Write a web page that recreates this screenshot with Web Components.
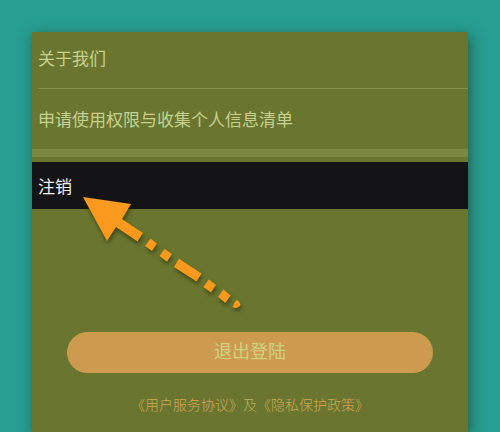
<!DOCTYPE html>
<html lang="zh-CN">
<head>
<meta charset="UTF-8">
<meta name="viewport" content="width=device-width, initial-scale=1">
<title>设置</title>
<style>
    body {
        margin: 0;
        background: #279f92;
        font-family: "Liberation Sans", "Noto Sans CJK SC", sans-serif;
    }
</style>
</head>
<body>
<settings-panel>
    <settings-row href="#about">关于我们</settings-row>
    <settings-row href="#permissions" last>申请使用权限与收集个人信息清单</settings-row>
    <settings-row href="#cancel" active>注销<pointer-arrow slot="marker"></pointer-arrow></settings-row>
    <logout-button slot="footer">退出登陆</logout-button>
    <legal-links slot="footer"></legal-links>
</settings-panel>

<script>
function makeTemplate(html) {
    const template = document.createElement("template")
    template.innerHTML = html
    return template
}

function attach(host, template) {
    const shadow = host.attachShadow({ mode: "open" })
    shadow.append(template.content.cloneNode(true))
    return shadow
}

const panelTemplate = makeTemplate(`
    <style>
        :host {
            display: flex;
            box-sizing: border-box;
            min-height: 100vh;
            padding: 32px 32px 0;
            overflow: hidden;
        }

        main {
            flex: 1;
            min-width: 0;
            background: #6a762f;
            box-shadow: 2px 4px 14px rgba(30, 50, 35, .65);
        }

        footer {
            display: flex;
            flex-direction: column;
            align-items: center;
            gap: 22px;
            padding: 123px 35px 17px;
        }
    </style>
    <main>
        <nav><slot></slot></nav>
        <footer><slot name="footer"></slot></footer>
    </main>
`)

class SettingsPanel extends HTMLElement {
    constructor() {
        super()
        attach(this, panelTemplate)
    }
}

const rowTemplate = makeTemplate(`
    <style>
        :host {
            display: block;
            position: relative;
            color: #c5d18c;
            font-size: 17px;
            line-height: 24px;
        }

        a {
            display: block;
            margin-left: 6px;
            padding: 16px 0;
            border-bottom: 1px solid #87914f;
            color: inherit;
            text-decoration: none;
        }

        :host([last]) a {
            margin-left: 0;
            padding: 20px 6px 16px;
            border-bottom: 8px solid #7c873f;
        }

        :host([active]) {
            margin-top: 5px;
            background: #141416;
            color: #f0f0f0;
        }

        :host([active]) a {
            padding: 14px 0 9px;
            border: 0;
        }

        /* lies over the row and the empty space under it */
        ::slotted([slot="marker"]) {
            position: absolute;
            top: 34px;
            left: 50px;
            pointer-events: none;
        }
    </style>
    <a><slot></slot></a>
    <slot name="marker"></slot>
`)

class SettingsRow extends HTMLElement {
    constructor() {
        super()
        this.link = attach(this, rowTemplate).querySelector("a")
    }

    static get observedAttributes() {
        return ["href"]
    }

    attributeChangedCallback(name, oldValue, newValue) {
        this.link.setAttribute("href", newValue)
    }
}

const arrowTemplate = makeTemplate(`
    <style>
        :host {
            display: block;
        }

        svg {
            display: block;
            overflow: visible;
            filter: drop-shadow(1px 3px 2px rgba(35, 40, 0, .6));
        }
    </style>
    <svg width="164" height="116" viewBox="82 196 164 116" fill="#f99a1f" aria-hidden="true">
        <path d="M83 197 L131 204 L122 219 L143 233 L137.500 241.500 L116 227 L107 241 Z"/>
        <path d="M150.500 238.500 L157 243.500 L152 251 L145 246 Z"/>
        <path d="M164.500 248.700 L172 254 L167 261.700 L159.500 256 Z"/>
        <path d="M179 258.700 L201.500 273.500 L196.500 281.500 L174 267 Z"/>
        <path d="M208.700 279.500 L216 284.700 L211 292.500 L203.500 287 Z"/>
        <path d="M223.500 289.500 L230.500 295.500 L225.500 303 L218 297 Z"/>
        <path d="M236.500 300 Q240.500 301.500 240.500 305 Q238 309.500 232.500 307 Q233.500 303 236.500 300 Z"/>
    </svg>
`)

class PointerArrow extends HTMLElement {
    constructor() {
        super()
        attach(this, arrowTemplate)
    }
}

const buttonTemplate = makeTemplate(`
    <style>
        :host {
            display: block;
            align-self: stretch;
        }

        button {
            display: block;
            width: 100%;
            padding: 8px;
            border: 0;
            border-radius: 24px;
            background: #cc9b50;
            color: #d0d27c;
            font: inherit;
            font-size: 18px;
            line-height: 25px;
        }
    </style>
    <button type="button"><slot></slot></button>
`)

class LogoutButton extends HTMLElement {
    constructor() {
        super()
        attach(this, buttonTemplate)
    }
}

const legalTemplate = makeTemplate(`
    <style>
        :host {
            display: block;
            color: #b3b35f;
            font-size: 14px;
            font-weight: 300;
            line-height: 20px;
            text-align: center;
        }

        a {
            color: #cda856;
            text-decoration: none;
        }
    </style>
    <a href="#terms">《用户服务协议》</a>及<a href="#privacy">《隐私保护政策》</a>
`)

class LegalLinks extends HTMLElement {
    constructor() {
        super()
        attach(this, legalTemplate)
    }
}

customElements.define("settings-panel", SettingsPanel)
customElements.define("settings-row", SettingsRow)
customElements.define("pointer-arrow", PointerArrow)
customElements.define("logout-button", LogoutButton)
customElements.define("legal-links", LegalLinks)
</script>
</body>
</html>
